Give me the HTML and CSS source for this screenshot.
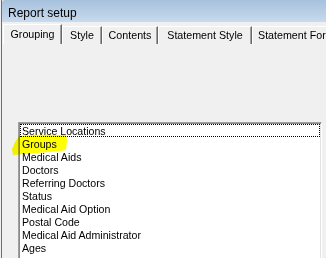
FILE: index.html
```html
<!DOCTYPE html>
<html>
<head>
<meta charset="utf-8">
<link rel="stylesheet" href="styles.css">
</head>
<body>
<div class="window">
  <div class="titlebar">Report setup</div>
  <div class="tabs">
    <div class="tab active w-grouping">Grouping</div>
    <div class="tab w-style">Style</div>
    <div class="tab w-contents">Contents</div>
    <div class="tab w-sstyle">Statement Style</div>
    <div class="tab w-sformat">Statement Format</div>
  </div>
  <div class="panel">
    <div class="listbox">
      <div class="item focus">Service Locations</div>
      <div class="item marked">Groups
        <svg class="marker" width="58" height="22" viewBox="0 0 58 22"><path d="M8 2 C20 0 40 1 55 1 L56 6 L55 16 C42 18 24 19 2 21 L1 15 L4 8 Z" fill="#ffff00"/></svg>
      </div>
      <div class="item">Medical Aids</div>
      <div class="item">Doctors</div>
      <div class="item">Referring Doctors</div>
      <div class="item">Status</div>
      <div class="item">Medical Aid Option</div>
      <div class="item">Postal Code</div>
      <div class="item">Medical Aid Administrator</div>
      <div class="item">Ages</div>
    </div>
  </div>
</div>
</body>
</html>
```
FILE: styles.css
```css
html, body {
  margin: 0;
  padding: 0;
  background: #f0f0f0;
  overflow: hidden;
  height: 258px;
}
.window {
  margin-left: 1px;
  border-left: 1px solid #6e6e6e;
  height: 258px;
  font-family: "Liberation Sans", Arial, sans-serif;
  color: #000;
}
.titlebar {
  height: 22px;
  box-sizing: border-box;
  padding: 4px 0 0 6px;
  line-height: 18px;
  font-size: 12px;
  background: linear-gradient(#a7c1dc, #c8daee);
  border-top-left-radius: 3px;
}
.tabs {
  display: flex;
  align-items: flex-end;
  margin-top: 2px;
  padding-left: 1px;
  height: 20px;
  white-space: nowrap;
  overflow: hidden;
}
.tab {
  flex: none;
  box-sizing: border-box;
  height: 18px;
  line-height: 17px;
  font-size: 10.7px;
  text-align: center;
  border-top: 1px solid #fff;
  border-left: 1px solid #fff;
  border-right: 1px solid #696969;
  box-shadow: inset -1px 0 #a0a0a0;
}
.tab.active {
  height: 20px;
  line-height: 19px;
}
.w-grouping { width: 59px; }
.w-style { width: 40px; }
.w-contents { width: 56px; }
.w-sstyle { width: 94px; }
.w-sformat { width: 100px; text-align: left; padding-left: 5px; }
.panel {
  padding: 78px 4px 0 16px;
}
.listbox {
  position: relative;
  background: #fff;
  border-top: 1px solid #a0a0a0;
  border-left: 1px solid #a0a0a0;
  border-right: 1px solid #fff;
  box-shadow: inset 1px 1px #8a8a8a, -1px 0 #e3e3e3 inset;
  padding: 1px 1px 0 1px;
  height: 140px;
}
.item {
  position: relative;
  height: 13px;
  line-height: 14px;
  font-size: 10.6px;
  padding-left: 2px;
  box-sizing: border-box;
}
.item.focus {
  outline: 1px dotted #000;
  outline-offset: -1px;
}
.marker {
  position: absolute;
  left: -9px;
  top: -3px;
  mix-blend-mode: multiply;
}
```
